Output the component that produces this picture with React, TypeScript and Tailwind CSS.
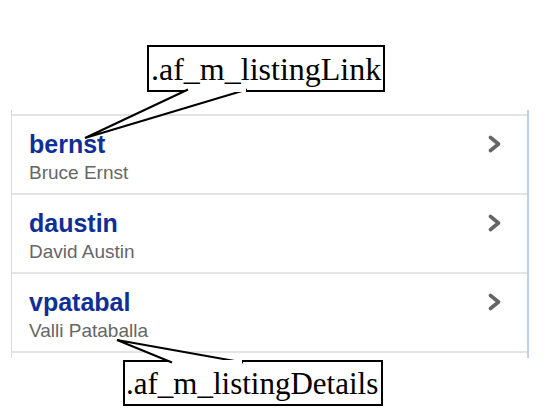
const people = [
  { id: "bernst", name: "Bruce Ernst" },
  { id: "daustin", name: "David Austin" },
  { id: "vpatabal", name: "Valli Pataballa" },
];

function Chevron() {
  return (
    <svg width="14" height="18" viewBox="0 0 14 18" className="shrink-0">
      <path
        d="M2.5 2.5 L10.5 9 L2.5 15.5"
        fill="none"
        stroke="#666666"
        strokeWidth="3.6"
        strokeLinecap="round"
        strokeLinejoin="round"
      />
    </svg>
  );
}

export default function App() {
  return (
    <div className="relative w-[549px] h-[417px] overflow-hidden bg-white">
      {/* listing */}
      <div className="ml-[11px] mt-[110px] w-[518px] h-[248px] border-l border-l-[#d5dce8] border-r-2 border-r-[#bed0ec] pt-[4px]">
        {people.map((p) => (
          <div
            key={p.id}
            className="h-[79px] border-t-2 border-[#e4e4e4] pl-[17px] pr-[25px] pt-[14px]"
            style={{ fontFamily: "Arial, 'Liberation Sans', sans-serif" }}
          >
            <div className="flex items-center justify-between h-[28px]">
              <span className="text-[25px] leading-[28px] font-bold text-[#0f2f97]">
                {p.id}
              </span>
              <Chevron />
            </div>
            <div className="mt-[4px] text-[19px] leading-[22px] text-[#666666]">
              {p.name}
            </div>
          </div>
        ))}
        <div className="border-t-2 border-[#e4e4e4]" />
      </div>

      {/* callout boxes */}
      <div
        className="absolute left-[147px] top-[45px] w-[238px] h-[47px] border-2 border-black bg-white flex items-center pl-[2px] text-[32px] leading-none text-black"
        style={{ fontFamily: "'Liberation Serif', 'Times New Roman', serif" }}
      >
        .af_m_listingLink
      </div>
      <div
        className="absolute left-[123px] top-[360px] w-[260px] h-[46px] border-2 border-black bg-white flex items-center pl-[1px] text-[31px] leading-none text-black"
        style={{ fontFamily: "'Liberation Serif', 'Times New Roman', serif" }}
      >
        .af_m_listingDetails
      </div>

      {/* pointers */}
      <svg
        className="absolute left-0 top-0 pointer-events-none"
        width="549"
        height="417"
        viewBox="0 0 549 417"
      >
        <polyline
          points="188,89.5 85,138 247,89.5"
          fill="white"
          stroke="black"
          strokeWidth="2"
        />
        <polygon points="189,88 246,88 246,92 189,92" fill="white" />
        <polyline
          points="172,362.5 117,340 243,362.5"
          fill="white"
          stroke="black"
          strokeWidth="2"
        />
        <polygon points="173,360 242,360 242,364 173,364" fill="white" />
      </svg>
    </div>
  );
}
